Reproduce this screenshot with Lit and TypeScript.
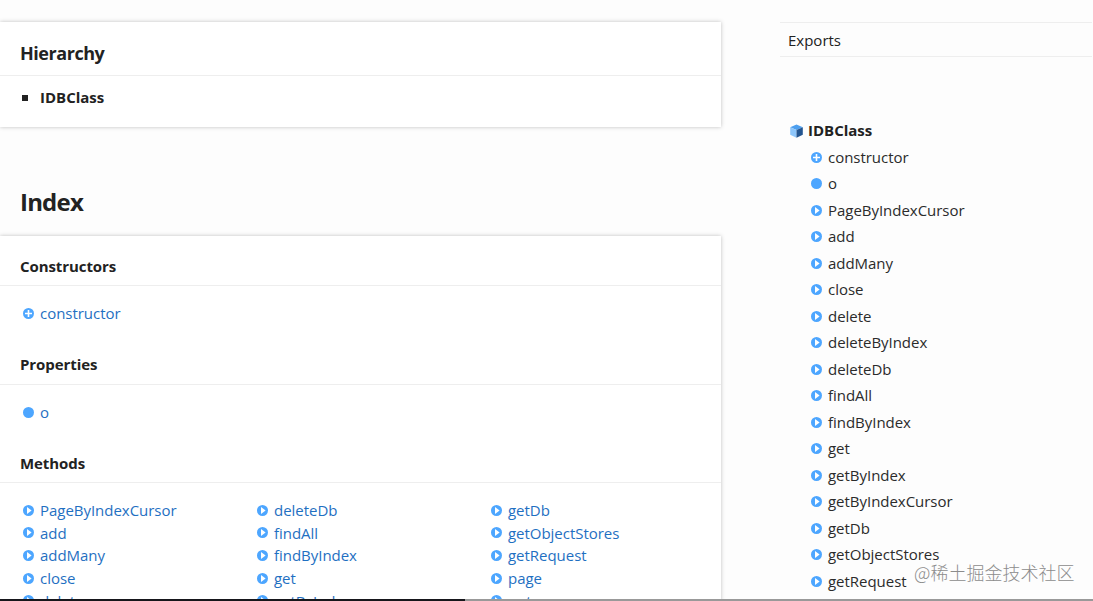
import { LitElement, html, css, svg } from "lit";
import { customElement, property } from "lit/decorators.js";

type Kind = "constructor" | "property" | "method" | "class";

@customElement("kind-icon")
class KindIcon extends LitElement {
  @property() kind: Kind = "method";
  static styles = css`
    :host { display: block; flex: none; width: 11px; height: 11px; }
    :host([kind="class"]) { width: 13px; height: 14px; }
    svg { display: block; width: 100%; height: 100%; }
  `;
  render() {
    if (this.kind === "class") {
      return html`<svg viewBox="0 0 13 14">
        <path fill="#4d9fef" d="M6.5 .5 12.8 3.3 6.5 6 .2 3.3Z" />
        <path fill="#8dc6fb" d="M.2 3.3 6.5 6V13.7L.2 10.8Z" />
        <path fill="#235590" d="M12.8 3.3 6.5 6V13.7L12.8 10.8Z" />
      </svg>`;
    }
    const mark =
      this.kind === "constructor"
        ? svg`<path fill="#fff" d="M4.7 2h1.6v2.7H9v1.6H6.3V9H4.7V6.3H2V4.7h2.7Z"/>`
        : this.kind === "method"
          ? svg`<path fill="#fff" d="M4 2 8.6 5.5 4 9Z"/>`
          : "";
    return html`<svg viewBox="0 0 11 11"><circle cx="5.5" cy="5.5" r="5.5" fill="#4da6ff" />${mark}</svg>`;
  }
}

const columns: string[][] = [
  ["PageByIndexCursor", "add", "addMany", "close", "delete"],
  ["deleteDb", "findAll", "findByIndex", "get", "getByIndex"],
  ["getDb", "getObjectStores", "getRequest", "page", "put"],
];

const members: [Kind, string][] = [
  ["constructor", "constructor"],
  ["property", "o"],
  ...[
    "PageByIndexCursor", "add", "addMany", "close", "delete", "deleteByIndex",
    "deleteDb", "findAll", "findByIndex", "get", "getByIndex",
    "getByIndexCursor", "getDb", "getObjectStores", "getRequest",
  ].map((name): [Kind, string] => ["method", name]),
];

@customElement("app-root")
class AppRoot extends LitElement {
  static styles = css`
    :host {
      display: block; position: relative; box-sizing: border-box;
      width: 1093px; height: 601px; overflow: hidden;
      background: #fdfdfd; color: #222;
      font: 15px/22px "Segoe UI", "Open Sans", "Noto Sans", sans-serif;
    }
    h1, h2, h3, ul { margin: 0; padding: 0; }
    ul { list-style: none; }
    .page { display: flex; height: 601px; }
    .main { width: 721px; flex: none; padding-top: 22px; }
    .card { background: #fff; box-shadow: 0 0 4px rgba(0, 0, 0, 0.25); }
    .hierarchy { height: 105px; }
    .hierarchy h2 {
      box-sizing: border-box; height: 54px; padding: 19px 20px 0;
      border-bottom: 1px solid #eee; font-size: 18px; line-height: 25px; font-weight: 700; letter-spacing: -0.45px;
    }
    .tree { display: flex; align-items: center; gap: 12px; padding: 10px 22px; font-weight: 700; }
    .square { width: 6px; height: 6px; margin-top: 1px; background: #222; }
    .tree, .root { letter-spacing: 0; }
    .title {
      height: 109px; box-sizing: border-box; padding: 58px 20px 0;
      font-size: 24px; line-height: 34px; font-weight: 700; letter-spacing: -0.8px;
    }
    .index { height: 380px; }
    .index h3 {
      box-sizing: border-box; padding: 0 20px; border-bottom: 1px solid #eee;
      font-size: 15px; line-height: 20px; font-weight: 700; letter-spacing: -0.08px;
    }
    .index .first { height: 50px; padding-top: 20px; }
    .single { height: 28px; padding: 16px 23px 24px; }
    .section { height: 31px; }
    .single + .section ~ .section { height: 30px; }
    .row { display: flex; align-items: center; gap: 6px; height: 22.6px; color: #1f70c2; }
    .row span { letter-spacing: -0.03px; }
    .columns { display: grid; grid-template-columns: repeat(3, 234px); padding: 16px 0 0 23px; }
    .side { margin-left: 59px; width: 312px; padding-top: 22px; }
    .exports { box-sizing: border-box; height: 35px; padding: 6px 8px; border: solid #eee; border-width: 1px 0; }
    .root { display: flex; align-items: center; gap: 5px; height: 27px; margin-top: 60px; padding-left: 10px; font-weight: 700; }
    .root span { margin-top: -2px; }
    .member { display: flex; align-items: center; gap: 6px; height: 26.5px; padding-left: 31px; }
    .member span { margin-top: -1px; letter-spacing: -0.03px; color: #2b2b2b; }
    .watermark {
      position: absolute; left: 914px; top: 559px; white-space: nowrap; color: #8c8c8c;
      font: 300 18px/26px "Noto Sans CJK SC", sans-serif; text-shadow: 0 0 1px #fff;
    }
    .edge { position: absolute; left: 0; bottom: 0; width: 100%; height: 2px; background: linear-gradient(90deg, #16161b 465px, #999 465px); }
  `;

  private link(kind: Kind, name: string) {
    return html`<li class="row"><kind-icon kind=${kind}></kind-icon><span>${name}</span></li>`;
  }

  render() {
    return html`
      <div class="page">
        <main class="main">
          <section class="card hierarchy">
            <h2>Hierarchy</h2>
            <div class="tree"><i class="square"></i><span>IDBClass</span></div>
          </section>
          <h1 class="title">Index</h1>
          <section class="card index">
            <h3 class="first">Constructors</h3>
            <ul class="single">${this.link("constructor", "constructor")}</ul>
            <h3 class="section">Properties</h3>
            <ul class="single">${this.link("property", "o")}</ul>
            <h3 class="section">Methods</h3>
            <div class="columns">
              ${columns.map((names) => html`<ul>${names.map((name) => this.link("method", name))}</ul>`)}
            </div>
          </section>
        </main>
        <aside class="side">
          <div class="exports">Exports</div>
          <div class="root"><kind-icon kind="class"></kind-icon><span>IDBClass</span></div>
          <ul>
            ${members.map(([kind, name]) => html`<li class="member"><kind-icon kind=${kind}></kind-icon><span>${name}</span></li>`)}
          </ul>
        </aside>
      </div>
      <div class="watermark">@稀土掘金技术社区</div>
      <div class="edge"></div>
    `;
  }
}
